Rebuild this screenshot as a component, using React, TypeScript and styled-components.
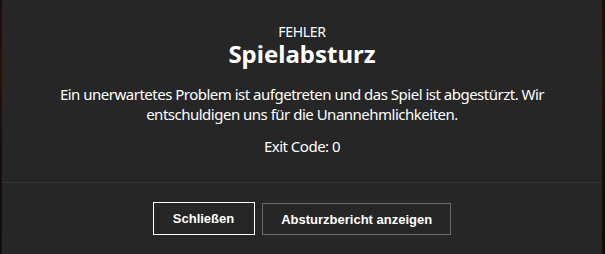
import React from "react";
import styled, { createGlobalStyle } from "styled-components";

const Global = createGlobalStyle`
  html, body { margin: 0; padding: 0; }
  body {
    width: 605px;
    height: 254px;
    overflow: hidden;
    background: linear-gradient(180deg, #1a0c08 0%, #2a1208 30%, #1c0d09 45%, #140a08 100%);
  }
`;

const Screen = styled.div`
  width: 605px;
  height: 254px;
  display: flex;
  padding-left: 2px;
  box-sizing: border-box;
`;

const Dialog = styled.div`
  width: 600px;
  height: 254px;
  background: #262626;
  display: flex;
  flex-direction: column;
  color: #ffffff;
`;

const Body = styled.div`
  display: flex;
  flex-direction: column;
  align-items: center;
  text-align: center;
  padding-top: 23px;
  height: 183px;
  box-sizing: border-box;
  border-bottom: 1px solid #353535;
  font-family: "Noto Sans", "Open Sans", sans-serif;
`;

const Kicker = styled.div`
  font-size: 14px;
  line-height: 17px;
  letter-spacing: -0.3px;
`;

const Title = styled.h1`
  margin: 0;
  font-size: 24px;
  line-height: 28px;
  font-weight: 700;
`;

const Message = styled.p`
  margin: 16px 0 0;
  font-size: 15px;
  line-height: 20px;
  letter-spacing: -0.5px;
  width: 520px;
`;

const Code = styled.p`
  margin: 12px 0 0;
  font-size: 15px;
  line-height: 20px;
  letter-spacing: -0.5px;
`;

const Footer = styled.div`
  display: flex;
  align-items: flex-start;
  justify-content: center;
  gap: 7px;
  padding-top: 20px;
`;

const Button = styled.button<{ $primary?: boolean }>`
  box-sizing: border-box;
  height: ${(p) => (p.$primary ? "33px" : "32px")};
  margin-top: ${(p) => (p.$primary ? "-1px" : "0")};
  padding: ${(p) => (p.$primary ? "0 20px 0 19px" : "0 18px")};
  background: transparent;
  color: #ffffff;
  font-family: "Liberation Sans", Arial, sans-serif;
  font-weight: 700;
  font-size: 13px;
  border: 1px solid ${(p) => (p.$primary ? "#ffffff" : "#6a6a6a")};
  outline: none;
  cursor: pointer;
`;

export default function App() {
  return (
    <>
      <Global />
      <Screen>
        <Dialog>
          <Body>
            <Kicker>FEHLER</Kicker>
            <Title>Spielabsturz</Title>
            <Message>
              Ein unerwartetes Problem ist aufgetreten und das Spiel ist abgestürzt. Wir
              entschuldigen uns für die Unannehmlichkeiten.
            </Message>
            <Code>Exit Code: 0</Code>
          </Body>
          <Footer>
            <Button $primary>Schließen</Button>
            <Button>Absturzbericht anzeigen</Button>
          </Footer>
        </Dialog>
      </Screen>
    </>
  );
}
